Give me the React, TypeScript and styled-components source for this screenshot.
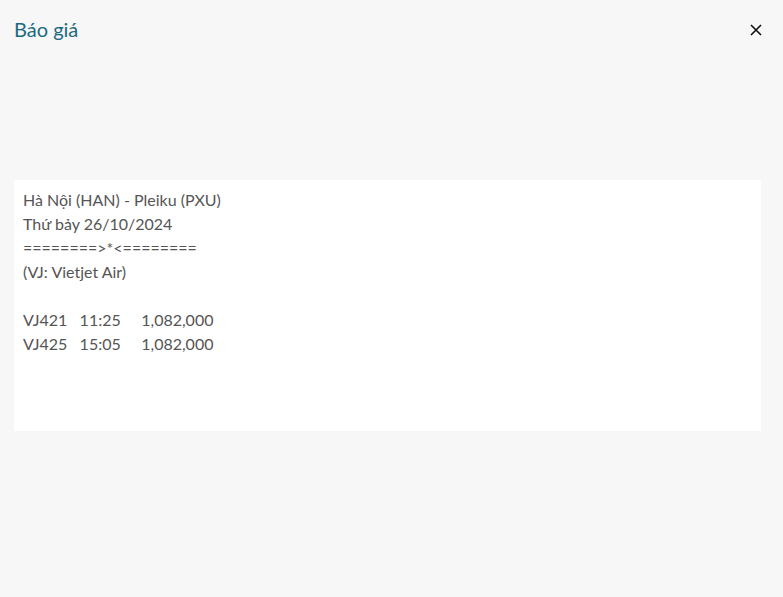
import React from "react";
import styled, { createGlobalStyle } from "styled-components";

const GlobalStyle = createGlobalStyle`
  html, body {
    margin: 0;
    padding: 0;
    background: #f7f7f7;
    font-family: Lato, "Noto Sans", sans-serif;
  }
`;

const Page = styled.div`
  width: 783px;
  height: 597px;
  padding: 0 14px;
  box-sizing: border-box;
  display: flex;
  flex-direction: column;
`;

const Header = styled.div`
  height: 60px;
  display: flex;
  align-items: center;
  justify-content: space-between;
`;

const Title = styled.h2`
  margin: 0 0 2px;
  font-size: 20px;
  font-weight: 400;
  color: #1b6a80;
`;

const CloseButton = styled.button`
  border: 0;
  background: transparent;
  padding: 0;
  margin-right: 6px;
  width: 14px;
  height: 14px;
  display: flex;
  align-items: center;
  justify-content: center;
  cursor: pointer;
`;

const Body = styled.div`
  margin: 120px 8px 0 0;
  height: 251px;
  background: #fff;
  padding: 8px 9px;
  box-sizing: border-box;
`;

const Quote = styled.div`
  margin: 0;
  font-size: 16px;
  line-height: 24px;
  color: #555;
  white-space: pre;
`;

const lines = [
  "Hà Nội (HAN) - Pleiku (PXU)",
  "Thứ bảy 26/10/2024",
  "========>*<========",
  "(VJ: Vietjet Air)",
  "",
  "VJ421   11:25     1,082,000",
  "VJ425   15:05     1,082,000",
];

export default function App() {
  return (
    <>
      <GlobalStyle />
      <Page>
        <Header>
          <Title>Báo giá</Title>
          <CloseButton aria-label="close">
            <svg width="12" height="12" viewBox="0 0 12 12">
              <path d="M1 1L11 11M11 1L1 11" stroke="#111" strokeWidth="1.6" />
            </svg>
          </CloseButton>
        </Header>
        <Body>
          <Quote>{lines.join("\n")}</Quote>
        </Body>
      </Page>
    </>
  );
}
